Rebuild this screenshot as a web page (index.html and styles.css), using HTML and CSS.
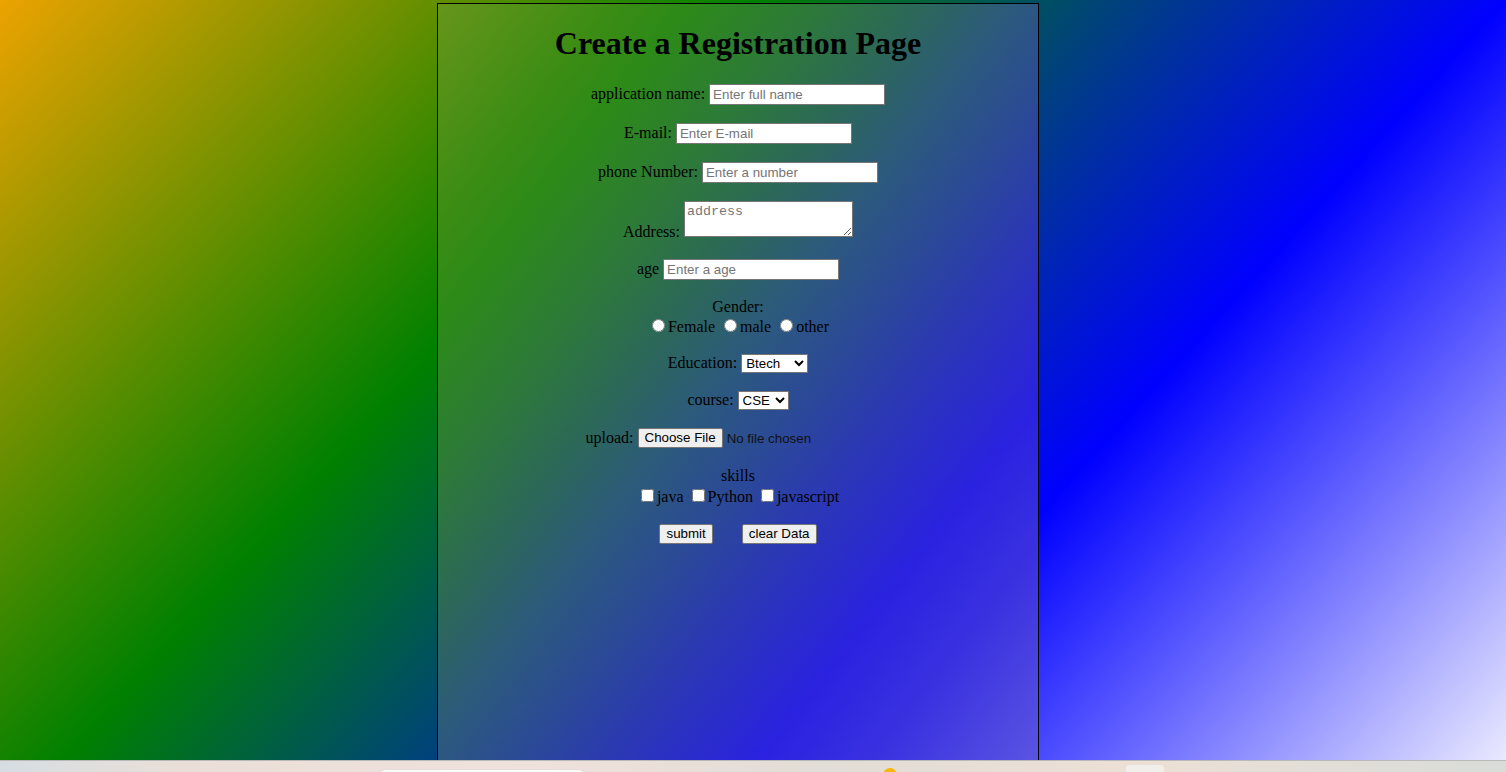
FILE: index.html
```html
<!DOCTYPE html>
<html lang="en">
<head>
<meta charset="utf-8">
<title>Registration Page</title>
<link rel="stylesheet" href="styles.css">
</head>
<body>
<div class="card">
  <h1 class="title">Create a Registration Page</h1>
  <form class="form">
    <div class="row"><label class="lbl" for="name">application name:</label> <input class="field" id="name" type="text" placeholder="Enter full name"></div>
    <div class="row"><label class="lbl" for="mail">E-mail:</label> <input class="field" id="mail" type="email" placeholder="Enter E-mail"></div>
    <div class="row"><label class="lbl" for="phone">phone Number:</label> <input class="field" id="phone" type="tel" placeholder="Enter a number"></div>
    <div class="row"><label class="lbl" for="addr">Address:</label> <textarea class="area" id="addr" placeholder="address"></textarea></div>
    <div class="row"><label class="lbl" for="age">age</label> <input class="field" id="age" type="text" placeholder="Enter a age"></div>
    <div class="row">
      <div class="line">Gender:</div>
      <div class="line"><input class="radio" type="radio" name="gender" id="gf"><label for="gf">Female</label> <input class="radio" type="radio" name="gender" id="gm"><label for="gm">male</label> <input class="radio" type="radio" name="gender" id="go"><label for="go">other</label></div>
    </div>
    <div class="row"><label class="lbl" for="edu">Education:</label> <select class="select select-edu" id="edu"><option>Btech</option><option>Mtech</option><option>Degree</option></select></div>
    <div class="row"><label class="lbl" for="course">course:</label> <select class="select select-course" id="course"><option>CSE</option><option>ECE</option><option>EEE</option></select></div>
    <div class="row row-file"><label class="lbl" for="up">upload:</label> <input class="file" id="up" type="file"></div>
    <div class="row">
      <div class="line">skills</div>
      <div class="line line-checks"><input class="check" type="checkbox" id="sj"><label for="sj">java</label> <input class="check" type="checkbox" id="sp"><label for="sp">Python</label> <input class="check" type="checkbox" id="sx"><label for="sx">javascript</label></div>
    </div>
    <div class="row"><input class="btn" type="submit" value="submit"><input class="btn btn-clear" type="reset" value="clear Data"></div>
  </form>
</div>
<div class="taskbar">
  <div class="tb-search"></div>
  <div class="tb-dot"></div>
  <div class="tb-app"></div>
</div>
</body>
</html>
```
FILE: styles.css
```css
html {
  height: 100%;
  background-color: #ffffff;
  background-image: linear-gradient(to bottom right, #eca300 0%, #008000 25%, #0000ff 50%, #ffffff 75%, #ffffff 100%);
  background-repeat: no-repeat;
  background-size: 100% 1660px;
}

body {
  margin: 0;
  height: 100%;
  overflow: hidden;
  font-family: "Liberation Serif", "Times New Roman", serif;
  font-size: 16px;
  color: #000;
}

.card {
  box-sizing: border-box;
  width: 602px;
  height: 769px;
  margin: 3px 0 0 437px;
  border: 1px solid #000;
  text-align: center;
  background: linear-gradient(to bottom right,
    #67951a 0%,
    #3a8c14 15%,
    #2c8a18 21%,
    #2d7a38 31%,
    #2c6858 40%,
    #2c5a7c 48%,
    #2b4a96 56%,
    #2b38b4 64%,
    #2a22e0 76%,
    #3a32e0 86%,
    #5c56e2 100%);
}

.title {
  margin: 21.44px 0;
  font-size: 32px;
  font-weight: bold;
}

.form {
  margin: 0;
}

.row {
  margin-bottom: 18px;
}

.row-file {
  margin-bottom: 19px;
}

.line-checks {
  padding-top: 1px;
}

.field {
  box-sizing: border-box;
  width: 176px;
  height: 21px;
  margin: 0;
  padding: 1px 3px;
  border: 1px solid #767676;
  border-radius: 0;
  background: #fff;
  font-family: "Liberation Sans", Arial, sans-serif;
  font-size: 13.333px;
  color: #000;
}

.field::placeholder,
.area::placeholder {
  color: #757575;
}

.area {
  box-sizing: border-box;
  width: 169px;
  height: 36px;
  margin: 0;
  padding: 2px;
  border: 1px solid #767676;
  border-radius: 0;
  background: #fff;
  font-family: "Liberation Mono", "Courier New", monospace;
  font-size: 13.333px;
}

.select {
  box-sizing: border-box;
  height: 19px;
  margin: 0;
  border: 1px solid #767676;
  border-radius: 0;
  background-color: #fff;
  color: #000;
  font-family: "Liberation Sans", Arial, sans-serif;
  font-size: 13.333px;
}

.select-edu {
  width: 67px;
}

.select-course {
  width: 51px;
}

.file {
  width: 253px;
  margin: 0;
  font-family: "Liberation Sans", Arial, sans-serif;
  font-size: 13.333px;
  color: #111;
}

.file::file-selector-button {
  box-sizing: border-box;
  height: 20px;
  margin: 0 4px 0 0;
  padding: 1px 6px;
  border: 1px solid #767676;
  border-radius: 2px;
  background: #efefef;
  color: #000;
  font-family: "Liberation Sans", Arial, sans-serif;
  font-size: 13.333px;
}

.btn {
  box-sizing: border-box;
  height: 20px;
  margin: 0;
  padding: 1px 6px;
  border: 1px solid #767676;
  border-radius: 2px;
  background: #efefef;
  color: #000;
  font-family: "Liberation Sans", Arial, sans-serif;
  font-size: 13.333px;
}

.btn-clear {
  margin-left: 29px;
}

.taskbar {
  position: fixed;
  left: 0;
  right: 0;
  bottom: 0;
  height: 11px;
  border-top: 1px solid #b9b9b9;
  display: flex;
  align-items: flex-start;
  overflow: hidden;
  background: linear-gradient(to right, #d6dde2 0%, #eadfd8 12%, #efe1dc 35%, #e2ddd6 55%, #ece0d6 75%, #d9dcd8 100%);
}

.tb-search {
  box-sizing: border-box;
  width: 208px;
  height: 14px;
  margin: 8px 0 0 378px;
  border: 1px solid #e2dedb;
  border-radius: 8px 8px 0 0;
  background: #fbfbfb;
}

.tb-dot {
  width: 14px;
  height: 14px;
  margin: 7px 0 0 297px;
  border-radius: 50%;
  background: #f5b90c;
}

.tb-app {
  width: 38px;
  height: 20px;
  margin: 4px 0 0 229px;
  border-radius: 4px;
  background: #f2efeb;
}
```
